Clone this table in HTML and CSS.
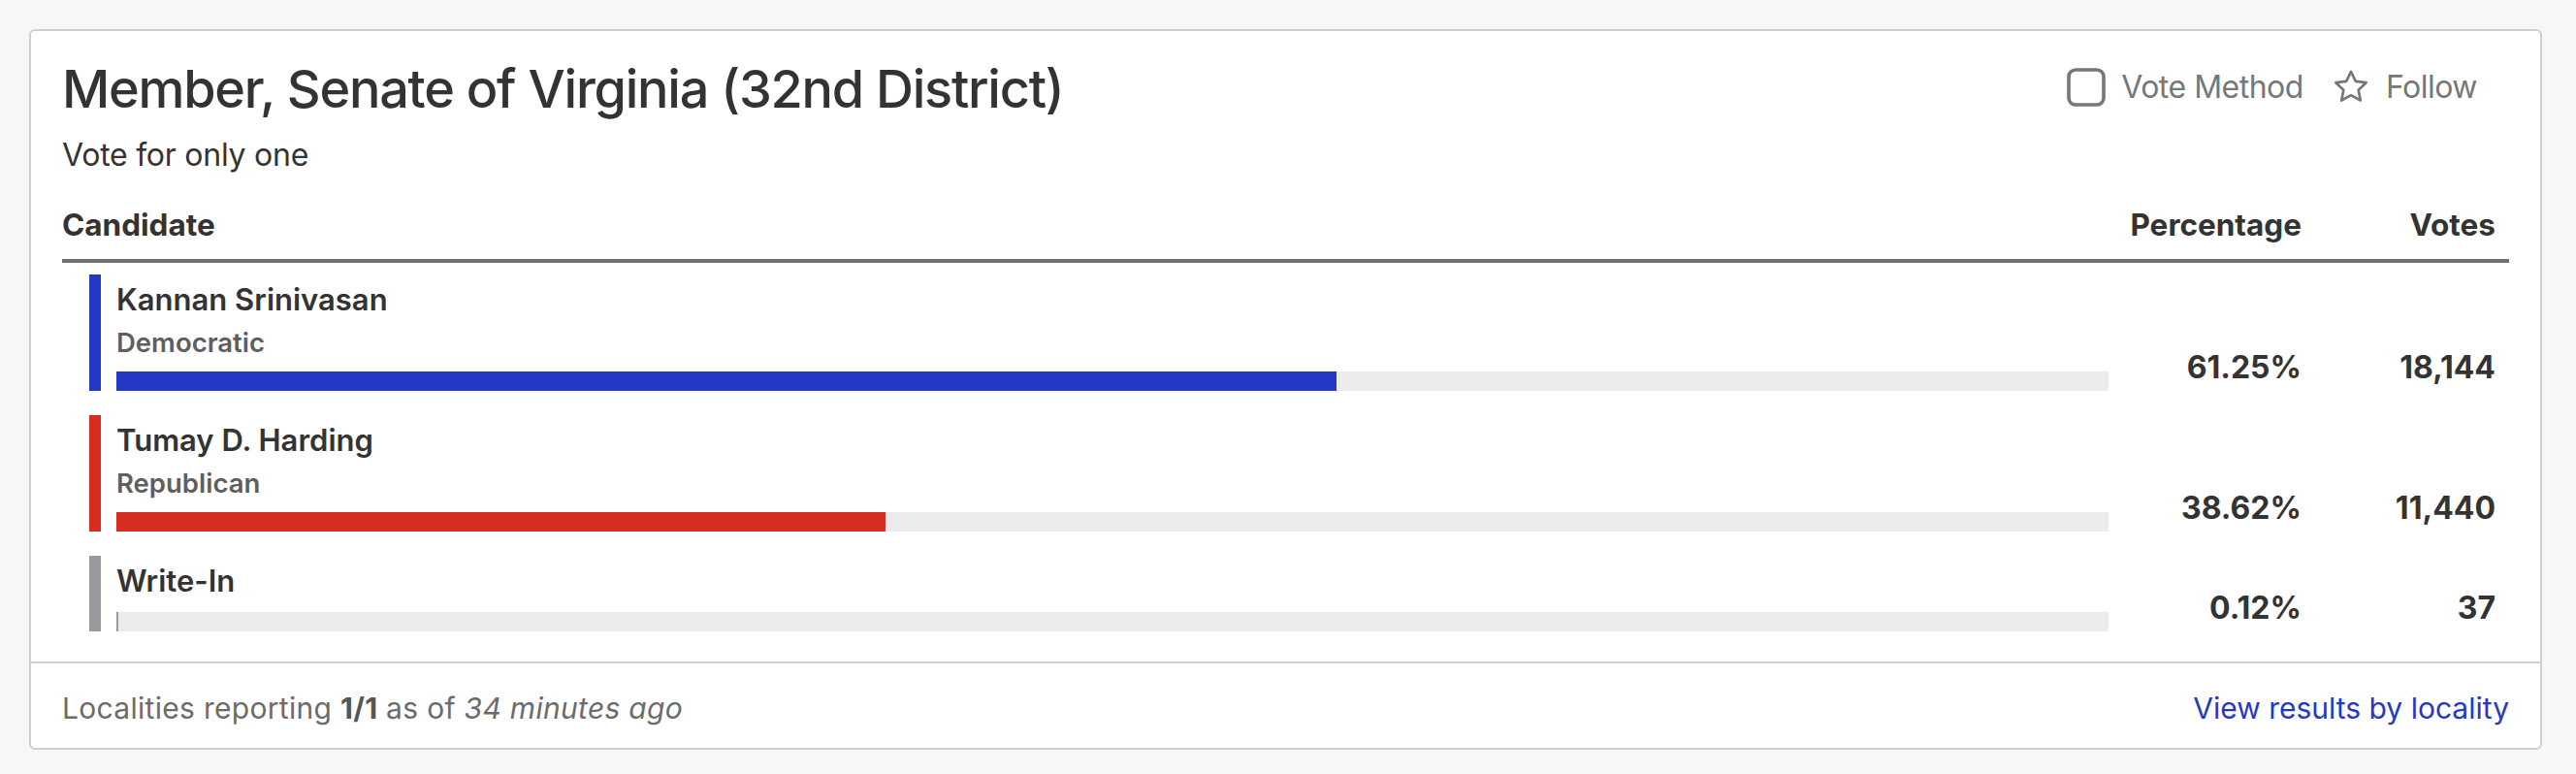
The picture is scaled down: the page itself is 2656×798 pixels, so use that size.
FILE: index.html
```html
<!DOCTYPE html>
<html lang="en">
<head>
<meta charset="utf-8">
<title>Member, Senate of Virginia (32nd District)</title>
<link rel="stylesheet" href="styles.css">
</head>
<body>
<section class="card">
  <div class="card-body">
    <header class="contest-header">
      <div class="contest-title-block">
        <h2 class="contest-title">Member, Senate of Virginia (32nd District)</h2>
        <p class="contest-sub">Vote for only one</p>
      </div>
      <div class="contest-actions">
        <button class="action" type="button">
          <svg class="icon" viewBox="0 0 40 40" width="40" height="40" aria-hidden="true">
            <rect x="2" y="2" width="36" height="36" rx="7" ry="7" fill="none" stroke="currentColor" stroke-width="3.6"/>
          </svg>
          <span>Vote Method</span>
        </button>
        <button class="action" type="button">
          <svg class="icon" viewBox="0 0 24 24" width="40" height="40" aria-hidden="true">
            <polygon points="12,2.3 14.9,8.3 21.4,9.1 16.6,13.6 17.9,20.1 12,16.9 6.1,20.1 7.4,13.6 2.6,9.1 9.1,8.3" fill="none" stroke="currentColor" stroke-width="1.6" stroke-linejoin="round"/>
          </svg>
          <span>Follow</span>
        </button>
      </div>
    </header>

    <div class="results">
      <div class="grid head-row">
        <div class="th">Candidate</div>
        <div class="th num">Percentage</div>
        <div class="th num">Votes</div>
      </div>

      <div class="rows">
        <div class="grid cand-row">
          <div class="cand">
            <span class="strip dem"></span>
            <div class="cand-info">
              <div class="cand-name">Kannan Srinivasan</div>
              <div class="cand-party">Democratic</div>
              <div class="track"><div class="fill dem" style="width:61.25%"></div></div>
            </div>
          </div>
          <div class="num val">61.25%</div>
          <div class="num val">18,144</div>
        </div>

        <div class="grid cand-row">
          <div class="cand">
            <span class="strip rep"></span>
            <div class="cand-info">
              <div class="cand-name">Tumay D. Harding</div>
              <div class="cand-party">Republican</div>
              <div class="track"><div class="fill rep" style="width:38.62%"></div></div>
            </div>
          </div>
          <div class="num val">38.62%</div>
          <div class="num val">11,440</div>
        </div>

        <div class="grid cand-row">
          <div class="cand">
            <span class="strip other"></span>
            <div class="cand-info">
              <div class="cand-name">Write-In</div>
              <div class="track"><div class="fill other" style="width:0.12%"></div></div>
            </div>
          </div>
          <div class="num val">0.12%</div>
          <div class="num val">37</div>
        </div>
      </div>
    </div>
  </div>

  <footer class="card-footer">
    <p class="reporting">Localities reporting <strong>1/1</strong> as of <em>34 minutes ago</em></p>
    <a class="locality-link" href="#">View results by locality</a>
  </footer>
</section>
</body>
</html>
```

FILE: styles.css
```css
* { box-sizing: border-box; }

html, body {
  margin: 0;
  background: #f7f7f7;
}

body {
  padding: 30px 35px 26px 30px;
  font-family: Inter, "Noto Sans", "Liberation Sans", sans-serif;
  color: #333333;
}

.card {
  background: #ffffff;
  border: 2px solid #cfcfcf;
  border-radius: 6px;
}

.card-body {
  padding: 26px 32px 31px 32px;
}

.contest-header {
  display: flex;
  justify-content: space-between;
  align-items: flex-start;
}

.contest-title {
  margin: 0;
  font-size: 54px;
  line-height: 67px;
  font-weight: 500;
  letter-spacing: -1.25px;
  color: #333333;
}

.contest-sub {
  margin: 11px 0 0 0;
  font-size: 32px;
  line-height: 48px;
  font-weight: 400;
  letter-spacing: -0.25px;
  color: #333333;
}

.contest-actions {
  display: flex;
  align-items: center;
  gap: 29px;
  margin-top: 8px;
  margin-right: 33px;
}

.action {
  display: flex;
  align-items: center;
  gap: 16px;
  padding: 0;
  border: 0;
  background: none;
  font-family: inherit;
  font-size: 32px;
  line-height: 48px;
  letter-spacing: -0.5px;
  color: #777777;
  cursor: pointer;
}

.icon {
  display: block;
  color: #777777;
}

.results {
  margin-top: 25px;
}

.grid {
  display: grid;
  grid-template-columns: 1fr 199px 200px;
  padding-right: 14px;
}

.head-row {
  border-bottom: 4px solid #707070;
  padding-bottom: 13px;
}

.th {
  font-size: 31.5px;
  line-height: 45px;
  font-weight: 700;
  color: #333333;
}

.num {
  text-align: right;
}

.rows {
  display: flex;
  flex-direction: column;
  gap: 25px;
  padding-top: 12px;
}

.cand {
  display: flex;
  gap: 16px;
  padding-left: 28px;
}

.strip {
  flex: 0 0 12px;
  width: 12px;
}

.strip.dem, .fill.dem { background: #2338c6; }
.strip.rep, .fill.rep { background: #d72c21; }
.strip.other { background: #999aa0; }
.fill.other { background: #999999; min-width: 2px; }

.cand-info {
  flex: 1;
  padding-top: 8px;
}

.cand-name {
  font-size: 31px;
  line-height: 36px;
  font-weight: 600;
  color: #333333;
}

.cand-party {
  margin-top: 8px;
  font-size: 27.5px;
  line-height: 36px;
  font-weight: 600;
  color: #5e5e5e;
}

.track {
  margin-top: 12px;
  height: 20px;
  background: #ececec;
}

.cand-name + .track {
  margin-top: 14px;
}

.fill {
  height: 100%;
}

.val {
  align-self: end;
  font-size: 32px;
  line-height: 32px;
  font-weight: 700;
  color: #333333;
  padding-bottom: 8px;
}

.card-footer {
  display: flex;
  justify-content: space-between;
  align-items: baseline;
  border-top: 2px solid #cfcfcf;
  padding: 25px 32px 19px 32px;
}

.reporting {
  margin: 0;
  font-size: 30px;
  line-height: 43px;
  letter-spacing: 0.3px;
  color: #6b6b6b;
}

.reporting strong {
  font-weight: 700;
  color: #555555;
}

.reporting em {
  font-style: italic;
}

.locality-link {
  font-size: 30px;
  line-height: 43px;
  color: #2438c4;
  text-decoration: none;
}
```
